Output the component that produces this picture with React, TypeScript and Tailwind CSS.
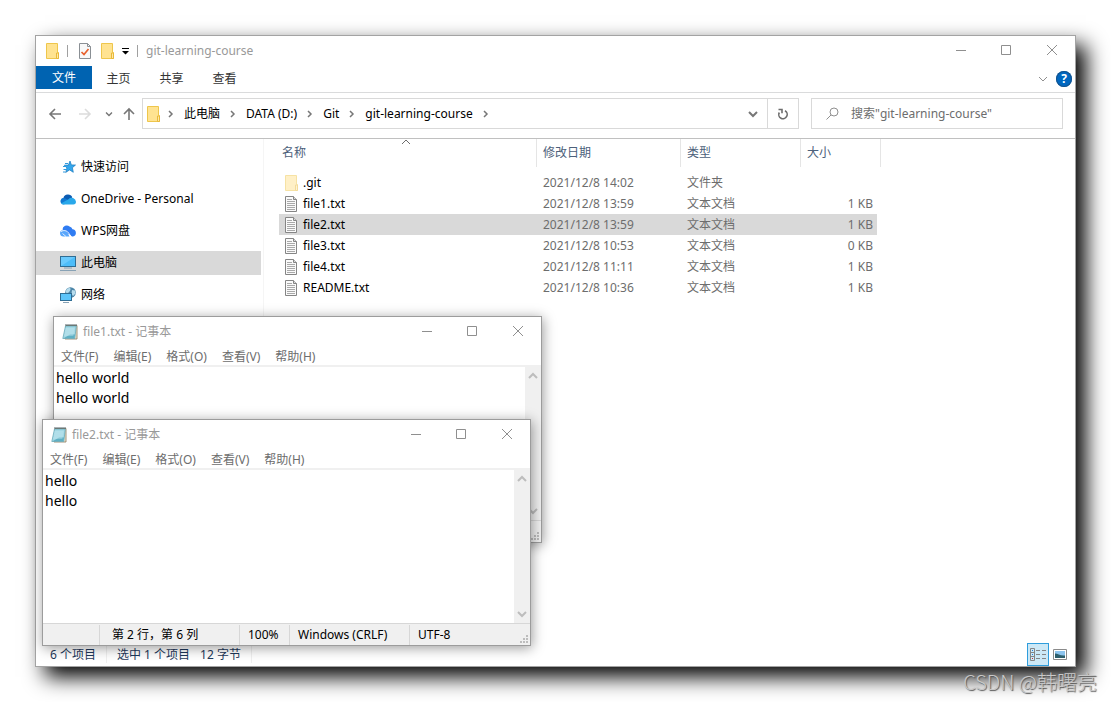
import { useState } from 'react';
import clsx from 'clsx';

import type { FC, ReactNode } from 'react';

interface FileEntry {
  name: string;
  date: string;
  type: string;
  size: string;
  folder?: boolean;
}

const FILES: FileEntry[] = [
  { name: '.git', date: '2021/12/8 14:02', type: '文件夹', size: '', folder: true },
  { name: 'file1.txt', date: '2021/12/8 13:59', type: '文本文档', size: '1 KB' },
  { name: 'file2.txt', date: '2021/12/8 13:59', type: '文本文档', size: '1 KB' },
  { name: 'file3.txt', date: '2021/12/8 10:53', type: '文本文档', size: '0 KB' },
  { name: 'file4.txt', date: '2021/12/8 11:11', type: '文本文档', size: '1 KB' },
  { name: 'README.txt', date: '2021/12/8 10:36', type: '文本文档', size: '1 KB' },
];

const CRUMBS = ['此电脑', 'DATA (D:)', 'Git', 'git-learning-course'];
const TABS = ['主页', '共享', '查看'];
const MENUS = ['文件(F)', '编辑(E)', '格式(O)', '查看(V)', '帮助(H)'];

const FolderIcon: FC<{ faded?: boolean }> = ({ faded }) => (
  <svg width="13" height="16" viewBox="0 0 13 16" className={clsx('shrink-0', faded && 'opacity-50')}>
    <path d="M.5.5h11v9h1v6H.5z" fill="#ffe391" stroke="#eec64c" />
    <path d="M10.5 15V10h2v5.5h-2z" fill="#ffe9a6" stroke="#e9b93a" />
  </svg>
);

const FileIcon = () => (
  <svg width="13" height="16" viewBox="0 0 13 16" className="shrink-0">
    <path d="M.5.5h8l3 3v12H.5z" fill="#fafafa" stroke="#858585" />
    <path d="M8.5.5v3h3" fill="#d9d9d9" stroke="#858585" />
    <path d="M2 3.500h5M2 5.500h8M2 7.500h8M2 9.500h8M2 11.500h8M2 13.500h8" stroke="#a9a9a9" />
  </svg>
);

const CheckDocIcon = () => (
  <svg width="12" height="16" viewBox="0 0 12 16">
    <path d="M.5.5h8l3 3v12H.5z" fill="#f8f8f8" stroke="#8a8f94" />
    <path d="M8.500.5v3h3" fill="none" stroke="#8a8f94" />
    <path d="m2.500 9 2.500 2.500L9.500 6" fill="none" stroke="#e8602c" strokeWidth="1.700" />
  </svg>
);

const NotepadIcon = () => (
  <svg width="16" height="16" viewBox="0 0 16 16">
    <path d="M4 1.500h11v13.500H3z" fill="#efe7d3" stroke="#8c7a5b" strokeWidth=".8" />
    <path d="M3.500 2h10.800L12.800 14.500H.8z" fill="#a3d8e4" stroke="#5aa0b2" strokeWidth=".7" />
    <path d="M8 10.500h5L12.500 14H2z" fill="#5fb0c4" />
    <path d="M3.500 5h9M3.200 7h9M2.800 9h9M2.400 11h9" stroke="#c6eaf1" strokeWidth=".8" />
    <path d="M4 0v2M6 0v2M8 0v2M10 0v2M12 0v2M14 0v2" stroke="#46555c" strokeWidth=".9" />
  </svg>
);

const StarIcon = () => (
  <svg width="16" height="16" viewBox="0 0 16 16">
    <path d="m10 2 1.400 3.900 4.100.1-3.100 2.700.9 4.600-3.700-2.400-4 2.600 1.300-4.500L4.300 6.200l4.100-.1z" fill="#35a7ec" stroke="#1978bd" strokeWidth=".7" />
    <path d="M5 4.500h3M3 7.500h3M3.500 10.500h3M3 13h2" stroke="#2f9ae0" />
  </svg>
);

const OneDriveIcon = () => (
  <svg width="16" height="11" viewBox="0 0 16 11">
    <path d="M3.400 4A4.700 4.700 0 0 1 12.300 3.300L7 9z" fill="#0b5cb3" />
    <path d="M3.500 10.500A3.300 3.300 0 1 1 5.500 4.400l6 3.600z" fill="#1279d2" />
    <path d="M8.500 5.300A4.300 4.300 0 0 1 16 7.800a2.800 2.800 0 0 1-3 2.700H3.300A3 3 0 0 1 1 9.500z" fill="#29a8ea" />
  </svg>
);

const WpsIcon = () => (
  <svg width="16" height="12" viewBox="0 0 16 12">
    <path d="M2.500 4.500A4.200 4.200 0 0 1 9.500 1.500a4 4 0 0 1 3 2.700A3.700 3.700 0 0 1 13 11.500h-1z" fill="#2f7cf2" />
    <path d="M0 8.500A3.500 3.500 0 0 1 3 5c2.200-.3 3.500.8 4.500 2.600L9.500 11.500H3.500A3.400 3.400 0 0 1 0 8.500z" fill="#58a6fb" />
    <path d="M1 6.500c3.500-2 6.500-.5 8 2l2 3" fill="none" stroke="#fff" strokeWidth=".9" />
    <path d="M2.500 8.500 6 11.500" stroke="#fff" strokeWidth=".8" />
  </svg>
);

const ComputerIcon = () => (
  <svg width="16" height="15" viewBox="0 0 16 15">
    <rect x=".5" y=".5" width="15" height="10" fill="#4dbdf9" stroke="#2f6d94" />
    <path d="M1 10V1h14z" fill="#7fd2ff" opacity=".6" />
    <path d="M4 12h8M0 14.500h16" stroke="#88a2b5" />
  </svg>
);

const NetworkIcon = () => (
  <svg width="16" height="16" viewBox="0 0 16 16">
    <circle cx="10.500" cy="5.500" r="5.300" fill="#4d86a8" />
    <path d="M7 2c2-1.500 4-1 3.500.5S9 6 7 6s-1-3 0-4zM12 3l3 .5.500 3-2.500 2.500-1.500-2z" fill="#b7dced" />
    <rect x=".5" y="6.500" width="11" height="7" fill="#5cc4fa" stroke="#2f6d94" />
    <path d="M3 15.500h6" stroke="#88a2b5" />
  </svg>
);

interface ChevronProps {
  dir: 'up' | 'down' | 'right';
  className?: string;
  width?: number;
}

const CHEVRONS = {
  up: 'M1 7 5 3l4 4',
  down: 'm1 3 4 4 4-4',
  right: 'm3 2 3 3-3 3',
};

const Chevron: FC<ChevronProps> = ({ dir, className, width = 1 }) => (
  <svg width="10" height="10" viewBox="0 0 10 10" fill="none" stroke="currentColor" strokeWidth={width} className={className}>
    <path d={CHEVRONS[dir]} />
  </svg>
);

const Arrow: FC<{ d: string; className?: string }> = ({ d, className }) => (
  <svg width="14" height="14" viewBox="0 0 14 14" fill="none" stroke="currentColor" strokeWidth="1.600" className={className}>
    <path d={d} />
  </svg>
);

const WindowControls = () => (
  <div className="ml-auto flex h-7 self-start text-[#8f8f8f]">
    <button aria-label="最小化" className="flex w-[45px] items-center justify-center">
      <svg width="10" height="10" stroke="currentColor"><path d="M0 5.500h10" /></svg>
    </button>
    <button aria-label="最大化" className="flex w-[45px] items-center justify-center">
      <svg width="10" height="10" fill="none" stroke="currentColor"><path d="M.5.5h9v9h-9z" /></svg>
    </button>
    <button aria-label="关闭" className="flex w-[47px] items-center justify-center">
      <svg width="10" height="10" stroke="currentColor"><path d="m0 0 10 10M10 0 0 10" /></svg>
    </button>
  </div>
);

const ResizeGrip = () => (
  <svg width="8" height="8" fill="#bdbdbd" className="mr-[2px] mb-[2px] ml-auto self-end">
    <path d="M6 0h2v2H6zM3 3h2v2H3zM6 3h2v2H6zM0 6h2v2H0zM3 6h2v2H3zM6 6h2v2H6z" />
  </svg>
);

interface NotepadProps {
  title: string;
  text: string;
  position: string;
  children?: ReactNode;
}

const Notepad: FC<NotepadProps> = ({ title, text, position, children }) => (
  <section
    className={clsx(
      'absolute flex h-[227px] w-[489px] flex-col border border-[#9c9c9c] bg-white shadow-[1px_2px_12px_rgba(0,0,0,0.4)]',
      position,
    )}
  >
    <header className="flex h-[29px] shrink-0 items-center pl-2">
      <NotepadIcon />
      <h2 className="ml-[5px] text-[#999]">{title} - 记事本</h2>
      <WindowControls />
    </header>
    <nav className="flex h-[19px] shrink-0 items-end gap-[15px] pl-[7px] text-[#6d6d6d]">
      {MENUS.map((menu) => <button key={menu}>{menu}</button>)}
    </nav>
    <div className="flex min-h-0 flex-1 border-t-2 border-[#f0f0f0]">
      <textarea
        aria-label={title}
        defaultValue={text}
        spellCheck={false}
        className="flex-1 resize-none overflow-hidden px-[2px] pt-px text-sm leading-5 text-black outline-none"
      />
      <div className="flex w-4 flex-col items-center justify-between bg-[#f0f0f0] py-1 text-[#bdbdbd]">
        <button aria-label="向上滚动"><Chevron dir="up" width={2} /></button>
        <button aria-label="向下滚动"><Chevron dir="down" width={2} /></button>
      </div>
    </div>
    <footer className="flex h-[22px] shrink-0 items-center border-t border-[#d7d7d7] bg-[#f0f0f0] text-black">
      {children}
      <ResizeGrip />
    </footer>
  </section>
);

const PLACES = [
  { label: '快速访问', icon: <StarIcon /> },
  { label: 'OneDrive - Personal', icon: <OneDriveIcon /> },
  { label: 'WPS网盘', icon: <WpsIcon /> },
  { label: '此电脑', icon: <ComputerIcon />, active: true },
  { label: '网络', icon: <NetworkIcon /> },
];

const Sidebar = () => (
  <aside className="w-[228px] shrink-0 border-r border-[#f5f5f5] pt-4 pr-[2px]">
    <ul className="flex flex-col gap-2">
      {PLACES.map(({ label, icon, active }) => (
        <li key={label}>
          <a href="#" className={clsx('flex h-6 items-center gap-[5px] pl-6 text-black', active && 'bg-[#d9d9d9]')}>
            <span className="flex w-4 justify-center">{icon}</span>
            {label}
          </a>
        </li>
      ))}
    </ul>
  </aside>
);

const FileTable = () => {
  const [selected, setSelected] = useState('file2.txt');

  return (
    <table className="ml-[15px] w-[602px] table-fixed border-separate border-spacing-0 self-start text-left">
      <thead>
        <tr className="h-7 text-[#4c607a]">
          <th className="relative w-[258px] border-r border-[#e5e5e5] pl-[3px] font-normal">
            名称
            <Chevron dir="up" className="absolute -top-[2px] left-[122px] text-[#6d6d6d]" />
          </th>
          <th className="w-36 border-r border-[#e5e5e5] pl-[6px] font-normal">修改日期</th>
          <th className="w-[120px] border-r border-[#e5e5e5] pl-[6px] font-normal">类型</th>
          <th className="w-20 border-r border-[#e5e5e5] pl-[6px] font-normal">大小</th>
        </tr>
      </thead>
      <tbody className="text-[#6d6d6d] before:block before:h-[5px]">
        {FILES.map(({ name, date, type, size, folder }) => (
          <tr
            key={name}
            onClick={() => setSelected(name)}
            className={clsx('h-[21px]', selected === name && 'bg-[#d9d9d9]')}
          >
            <td className="pl-[6px] text-black">
              <span className="flex items-center gap-[5px]">
                {folder ? <FolderIcon faded /> : <FileIcon />}
                {name}
              </span>
            </td>
            <td className="pl-[6px]">{date}</td>
            <td className="pl-[6px]">{type}</td>
            <td className="border-r-4 border-white pr-1 text-right">{size}</td>
          </tr>
        ))}
      </tbody>
    </table>
  );
};

const AddressBar = () => (
  <div className="flex h-[45px] items-center pr-3 pb-1 text-[#777]">
    <button aria-label="后退" className="ml-3"><Arrow d="M13 7H2M7 2 2 7l5 5" /></button>
    <button aria-label="前进" className="ml-4"><Arrow d="M1 7h11M7 2l5 5-5 5" className="text-[#dcdcdc]" /></button>
    <button aria-label="最近位置" className="ml-3"><Chevron dir="down" width={2} className="scale-75" /></button>
    <button aria-label="上移" className="mx-2"><Arrow d="M7 13V2M2 7l5-5 5 5" /></button>
    <div className="-ml-[2px] flex h-[31px] flex-1 items-center border border-[#d9d9d9] pl-1 text-black">
      <FolderIcon />
      <div className="-ml-[2px] flex items-center">
        {CRUMBS.map((crumb) => (
          <span key={crumb} className="flex items-center">
            <Chevron dir="right" width={1.500} className="mx-2 text-[#777]" />
            <a href="#">{crumb}</a>
          </span>
        ))}
        <Chevron dir="right" width={1.500} className="mx-2 text-[#777]" />
      </div>
      <button aria-label="历史记录" className="mr-[9px] ml-auto"><Chevron dir="down" width={2} className="text-[#777]" /></button>
      <button aria-label="刷新" className="flex h-full w-[31px] items-center justify-center border-l border-[#d9d9d9] text-[#6d6d6d]">
        <svg width="12" height="12" viewBox="0 0 12 12" fill="none" stroke="currentColor" strokeWidth="1.600">
          <path d="M1.500 1.500H5v3.800" />
          <path d="M2.300 4.500A4.200 4.200 0 1 0 8 2.800" />
        </svg>
      </button>
    </div>
    <label className="ml-3 flex h-[31px] w-[252px] items-center border border-[#d9d9d9] pl-[14px]">
      <svg width="13" height="13" viewBox="0 0 13 13" fill="none" stroke="#8f8f8f">
        <circle cx="8" cy="5" r="4" />
        <path d="M5 8 .5 12.500" />
      </svg>
      <input
        aria-label="搜索"
        placeholder={'搜索"git-learning-course"'}
        className="ml-3 min-w-0 flex-1 outline-none placeholder:text-[#6d6d6d]"
      />
    </label>
  </div>
);

const Explorer = () => (
  <main className="flex flex-1 flex-col border border-[#a3a3a3] bg-white shadow-[10px_10px_20px_#000]">
    <header className="flex h-[30px] items-center pl-[10px]">
      <FolderIcon />
      <span className="mx-2 h-3 w-px bg-[#a0a0a0]" />
      <button aria-label="属性" className="ml-[3px]"><CheckDocIcon /></button>
      <button aria-label="新建文件夹" className="ml-[10px]"><FolderIcon /></button>
      <button aria-label="自定义快速访问工具栏" className="ml-2">
        <svg width="7" height="7"><path d="M0 0h7v1H0zM0 3h7L3.500 6.500z" /></svg>
      </button>
      <span className="mx-2 h-3 w-px bg-[#a0a0a0]" />
      <h1 className="text-[#999]">git-learning-course</h1>
      <WindowControls />
    </header>
    <nav className="flex h-[27px] items-start border-b border-[#dadbdc] text-[#333]">
      <button className="h-[23px] w-14 bg-[#0063b1] text-white">文件</button>
      {TABS.map((tab) => <button key={tab} className="h-[25px] w-[53px]">{tab}</button>)}
      <button aria-label="展开功能区" className="mt-2 ml-auto"><Chevron dir="down" className="text-[#8f8f8f]" /></button>
      <button aria-label="帮助" className="mt-[5px] mr-[3px] ml-2 h-4 w-4 rounded-full bg-[#0067c0] text-xs leading-4 font-bold text-white ring-1 ring-[#16538b] ring-inset">
        ?
      </button>
    </nav>
    <AddressBar />
    <div className="flex flex-1 border-t border-[#c0c0c0]">
      <Sidebar />
      <FileTable />
    </div>
    <footer className="flex h-6 items-center pl-[14px] text-[#1e395b]">
      <span className="border-r border-[#f0f0f0] pt-px pr-[10px]">6 个项目</span>
      <span className="flex gap-[10px] border-r border-[#f0f0f0] px-[10px] pt-px">
        <span>选中 1 个项目</span>
        <span>12 字节</span>
      </span>
      <button aria-label="详细信息" className="ml-auto flex h-[23px] w-[22px] items-center justify-center border border-[#2f9ddc] bg-[#cce8f6]">
        <svg width="16" height="13" viewBox="0 0 16 13" fill="none" stroke="#858585">
          <path d="M.5.5h4v12h-4zM.5 4.500h4M.5 8.500h4M6 2.500h4M12 2.500h4M6 6.500h4M12 6.500h4M6 10.500h4M12 10.500h4" />
          <path d="M2 2.500h1M2 6.500h1" stroke="#2a7ad0" />
          <path d="M2 10.500h1" stroke="#d02a2a" />
        </svg>
      </button>
      <button aria-label="大图标" className="mr-2 ml-1">
        <svg width="14" height="11" viewBox="0 0 14 11">
          <path d="M.5.5h13v10H.5z" fill="#fff" stroke="#8a8a8a" />
          <path d="M2 2h10v7H2z" fill="#8cc4ee" />
          <path d="M2 4.500c3 0 5 2.500 10 2v2.500H2z" fill="#2d5e6b" />
        </svg>
      </button>
    </footer>
  </main>
);

const App = () => (
  <div className='relative flex min-h-screen flex-col overflow-hidden bg-white p-[35px] font-["Noto_Sans","Noto_Sans_CJK_SC",sans-serif] text-xs'>
    <Explorer />
    <Notepad title="file1.txt" text={'hello world\nhello world'} position="top-[316px] left-[53px]" />
    <Notepad title="file2.txt" text={'hello\nhello'} position="top-[419px] left-[42px]">
      <span className="h-5 w-[57px] border-r border-[#d7d7d7]" />
      <span className="h-5 w-[140px] border-r border-[#d7d7d7] pl-3 leading-5">第 2 行，第 6 列</span>
      <span className="h-5 w-[50px] border-r border-[#d7d7d7] pl-2 leading-5">100%</span>
      <span className="h-5 w-[120px] border-r border-[#d7d7d7] pl-2 leading-5">Windows (CRLF)</span>
      <span className="pl-2">UTF-8</span>
    </Notepad>
    <div className='absolute right-[14px] bottom-[6px] font-["Noto_Sans_CJK_SC",sans-serif] text-xl font-light text-[#c8c8c8] [text-shadow:1px_1px_1px_#555]'>
      CSDN @韩曙亮
    </div>
  </div>
);

export default App;
